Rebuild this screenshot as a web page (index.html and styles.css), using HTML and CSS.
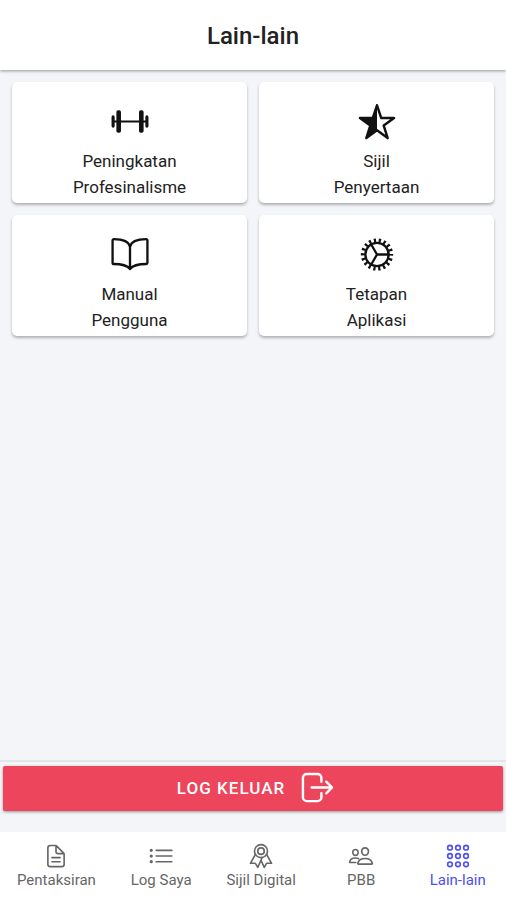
FILE: index.html
```html
<!DOCTYPE html>
<html lang="ms">
<head>
<meta charset="utf-8">
<meta name="viewport" content="width=device-width, initial-scale=1">
<title>Lain-lain</title>
<link rel="stylesheet" href="styles.css">
</head>
<body>
<header class="toolbar"><h1 class="toolbar-title">Lain-lain</h1></header>
<main class="content">
  <div class="menu">
    <a class="card" href="#profesionalisme">
      <svg class="card-icon" viewBox="0 0 512 512" aria-hidden="true">
        <path stroke-width="24" d="M48 250h416"/>
        <rect class="solid" x="366" y="112" width="56" height="276" rx="22"/>
        <rect class="solid" x="90" y="112" width="56" height="276" rx="22"/>
        <path stroke-width="38" d="M462 194v112M50 194v112"/>
      </svg>
      <span class="card-label">Peningkatan<br>Profesinalisme</span>
    </a>
    <a class="card" href="#penyertaan">
      <svg class="card-icon" viewBox="0 0 512 512" aria-hidden="true">
        <path stroke-width="30" d="M464 208H308L256 52l-52 156H48l126 92-48 152 130-94 130 94-48-152z"/>
        <path class="solid" d="M256 52v306L126 452l48-152L48 208h156z"/>
      </svg>
      <span class="card-label">Sijil<br>Penyertaan</span>
    </a>
    <a class="card" href="#manual">
      <svg class="card-icon" viewBox="-14 -2 540 540" aria-hidden="true">
        <path stroke-width="30" d="M256 160c16-63.16 76.43-95.41 208-96a15.94 15.94 0 0116 16v288a16 16 0 01-16 16c-128 0-177.45 25.81-208 64-30.37-38-80-64-208-64-9.88 0-16-8.05-16-17.93V80a15.94 15.94 0 0116-16c131.57.59 192 32.84 208 96zM256 160v288"/>
      </svg>
      <span class="card-label">Manual<br>Pengguna</span>
    </a>
    <a class="card" href="#tetapan">
      <svg class="card-icon" viewBox="0 0 512 512" aria-hidden="true">
        <circle cx="256" cy="250" r="142" stroke-width="28"/>
        <circle class="teeth" cx="256" cy="250" r="172" stroke-width="50" pathLength="36" stroke-dasharray="0.9 1.1" stroke-dashoffset=".45"/>
        <path stroke-width="28" d="M256 250h144M256 250l-72-125M256 250l-72 125"/>
      </svg>
      <span class="card-label">Tetapan<br>Aplikasi</span>
    </a>
  </div>
</main>
<div class="logout-bar">
  <button class="logout" type="button">
    <span>LOG KELUAR</span>
    <svg class="logout-icon" viewBox="0 0 34 34" aria-hidden="true">
      <path d="M21 11V7a4 4 0 00-4-4H6a4 4 0 00-4 4v20a4 4 0 004 4h11a4 4 0 004-4v-4M11 17h21M26 11l6 6-6 6"/>
    </svg>
  </button>
</div>
<nav class="tabs" aria-label="Navigasi utama">
  <a class="tab" href="#pentaksiran">
    <svg class="tab-icon" viewBox="0 0 512 512" aria-hidden="true">
      <path d="M416 221.25V416a48 48 0 01-48 48H144a48 48 0 01-48-48V96a48 48 0 0148-48h98.75a32 32 0 0122.62 9.37l141.26 141.26a32 32 0 019.37 22.62zM256 56v120a32 32 0 0032 32h120M176 288h160M176 368h160"/>
    </svg>
    <span>Pentaksiran</span>
  </a>
  <a class="tab" href="#log">
    <svg class="tab-icon" viewBox="0 0 512 512" aria-hidden="true">
      <path d="M160 144h310M160 256h310M160 368h310"/>
      <circle cx="64" cy="144" r="16"/><circle cx="64" cy="256" r="16"/><circle cx="64" cy="368" r="16"/>
    </svg>
    <span>Log Saya</span>
  </a>
  <a class="tab" href="#sijil">
    <svg class="tab-icon" viewBox="0 0 512 512" aria-hidden="true">
      <circle cx="256" cy="160" r="128"/><circle cx="256" cy="160" r="64"/>
      <path d="M143.65 227.82L48 400l86.86-.42a16 16 0 0113.82 7.8L192 480l88.33-194.32M366.54 224L464 400l-86.86-.42a16 16 0 00-13.82 7.8L320 480l-64-140.8"/>
    </svg>
    <span>Sijil Digital</span>
  </a>
  <a class="tab" href="#pbb">
    <svg class="tab-icon" viewBox="0 0 512 512" aria-hidden="true">
      <path d="M402 168c-2.93 40.67-33.1 72-66 72s-63.12-31.32-66-72c-3-42.31 26.37-72 66-72s69 30.46 66 72zM336 304c-65.17 0-127.84 32.37-143.54 95.41-2.08 8.34 3.15 16.59 11.72 16.59h263.65c8.57 0 13.77-8.25 11.72-16.59C463.85 335.36 401.18 304 336 304zM200 185.94c-2.34 32.48-26.72 58.06-53 58.06s-50.7-25.57-53-58.06C91.61 152.15 115.34 128 147 128s55.39 24.77 53 57.94zM206 306c-18.05-8.27-37.93-11.45-59-11.45-52 0-102.1 25.85-114.65 76.2-1.65 6.66 2.53 13.25 9.37 13.25H154"/>
    </svg>
    <span>PBB</span>
  </a>
  <a class="tab tab-selected" href="#lain" aria-current="page">
    <svg class="tab-icon" viewBox="0 0 512 512" aria-hidden="true">
      <g class="dots">
        <circle cx="98" cy="92" r="46"/><circle cx="256" cy="92" r="46"/><circle cx="414" cy="92" r="46"/>
        <circle cx="98" cy="256" r="46"/><circle cx="256" cy="256" r="46"/><circle cx="414" cy="256" r="46"/>
        <circle cx="98" cy="420" r="46"/><circle cx="256" cy="420" r="46"/><circle cx="414" cy="420" r="46"/>
      </g>
    </svg>
    <span>Lain-lain</span>
  </a>
</nav>
</body>
</html>
```
FILE: styles.css
```css
* { box-sizing: border-box; }

body {
  margin: 0;
  min-height: 100vh;
  display: flex;
  flex-direction: column;
  background: #f3f5f9;
  color: #222;
  font-family: Roboto, "Liberation Sans", sans-serif;
}

a { color: inherit; text-decoration: none; }

svg {
  fill: none;
  stroke: currentColor;
  stroke-linecap: round;
  stroke-linejoin: round;
}

.toolbar {
  padding: 20px 12px 18px;
  background: #fff;
  box-shadow: 0 1px 3px rgba(0, 0, 0, .4);
  text-align: center;
}

.toolbar-title {
  margin: 0;
  font-size: 24px;
  line-height: 32px;
  font-weight: 500;
}

.content { flex: 1; padding: 12px; }

.menu {
  display: grid;
  grid-template-columns: 1fr 1fr;
  gap: 12px;
}

.card {
  display: flex;
  flex-direction: column;
  align-items: center;
  gap: 5px;
  padding: 19px 12px 3px;
  background: #fff;
  border-radius: 5px;
  box-shadow: 0 2px 3px rgba(0, 0, 0, .28);
}

.card-icon { width: 42px; height: 42px; color: #111; }
.solid { fill: currentColor; stroke: none; }
.teeth { stroke-linecap: butt; }

.card-label {
  font-size: 17px;
  line-height: 26px;
  text-align: center;
}

.logout-bar {
  padding: 4px 3px 21px;
  border-top: 2px solid #e3e6e7;
}

.logout {
  display: flex;
  align-items: center;
  justify-content: center;
  gap: 16px;
  width: 100%;
  height: 45px;
  padding: 0 0 2px 5px;
  border: 0;
  border-radius: 2px;
  background: #ed455c;
  box-shadow: 0 1px 3px rgba(0, 0, 0, .4);
  color: #fff;
  font: 500 17px/24px Roboto, "Liberation Sans", sans-serif;
  letter-spacing: 0.06em;
}

.logout-icon { width: 33px; height: 33px; stroke-width: 2.5; }

.tabs {
  display: flex;
  padding: 11px 0 10px;
  background: #fff;
  color: #666;
}

.tab {
  flex: 1 1 0;
  display: flex;
  flex-direction: column;
  align-items: center;
  gap: 1px;
  padding: 0 17px;
  font-size: 15px;
  line-height: 20px;
  white-space: nowrap;
}

.tab-icon { width: 26px; height: 26px; stroke-width: 32; }
.dots { stroke-width: 32; }
.tab-selected { color: #4f4fee; }
```
